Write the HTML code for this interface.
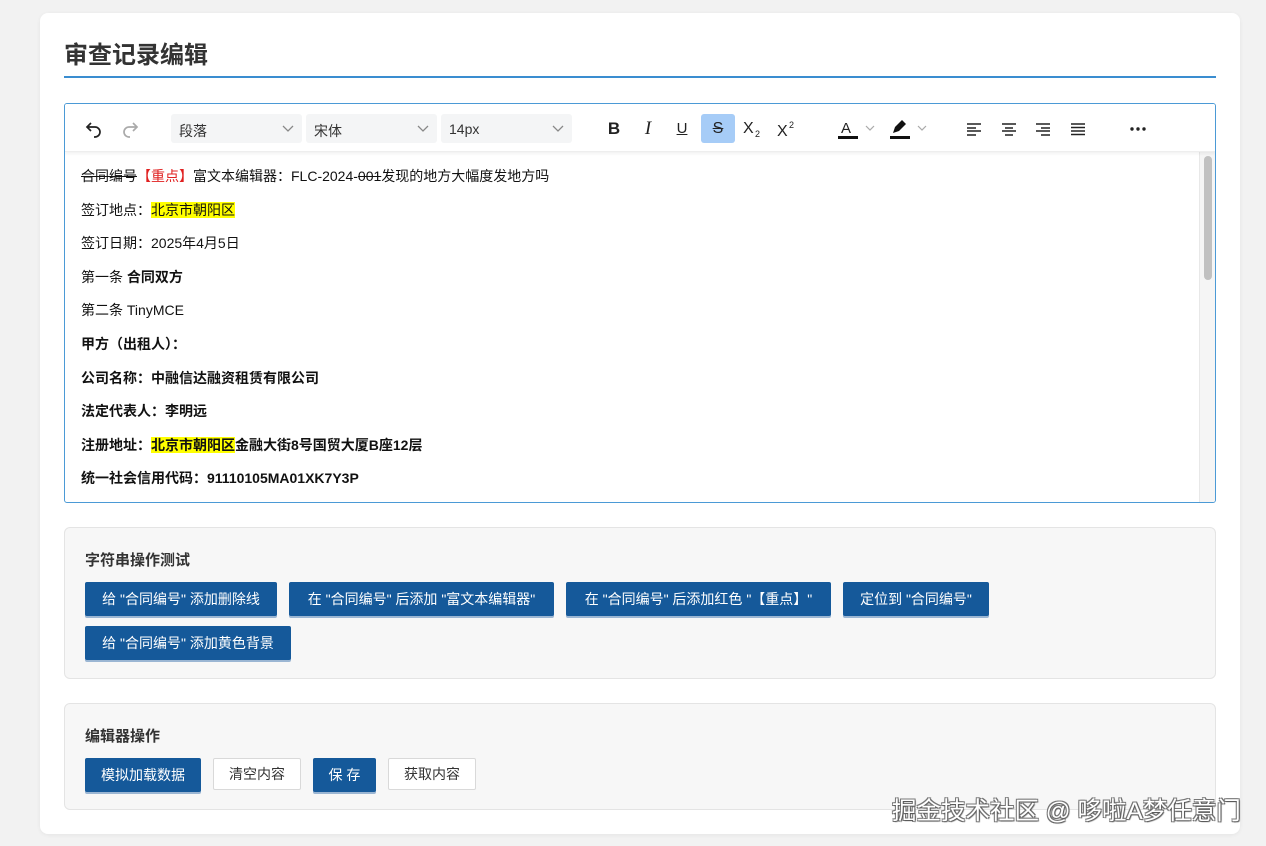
<!DOCTYPE html>
<html><head><meta charset="utf-8"><style>
*{box-sizing:border-box;margin:0;padding:0}
body{width:1266px;height:846px;background:#f2f2f2;font-family:"Liberation Sans","Noto Sans CJK SC",sans-serif;position:relative;overflow:hidden;color:#222}
.card{position:absolute;left:40px;top:13px;width:1200px;height:821px;background:#fff;border-radius:8px;box-shadow:0 1px 4px rgba(0,0,0,.06)}
.title{position:absolute;left:64px;top:35px;font-size:24px;font-weight:bold;color:#333}
.hr{position:absolute;left:64px;top:76px;width:1152px;height:2px;background:#3a8dd0}
.ed{position:absolute;left:64px;top:103px;width:1152px;height:400px;border:1px solid #4b9ad6;border-radius:3px;overflow:hidden}
.tb{position:absolute;left:0;top:0;width:1150px;height:48px;background:#fff;box-shadow:0 2px 3px rgba(0,0,0,.05);border-bottom:1px solid #eee}
.sel{position:absolute;top:10px;height:29px;background:#f4f5f6;border-radius:3px;font-size:14px;color:#333;padding:7px 8px;}
.sel svg{position:absolute;right:8px;top:11px}
.ic{position:absolute;top:10px;width:34px;height:29px;display:flex;align-items:center;justify-content:center;font-size:16px;color:#222}
.content{position:absolute;left:16px;top:64px;font-size:14px;line-height:33.6px;color:#111}
.content p{height:33.6px;white-space:nowrap}
.hl{background:#ffff00}
.sb{position:absolute;right:4px;top:52px;width:8px;height:124px;background:#c1c1c1;border-radius:4px}
.sbt{position:absolute;right:0;top:48px;width:16px;height:350px;background:#f5f5f5;border-left:1px solid #e8e8e8}
.sec{position:absolute;left:64px;width:1152px;background:#f7f7f7;border:1px solid #e4e4e4;border-radius:6px}
.sec h3{position:absolute;left:20px;font-size:15px;font-weight:bold;color:#333}
.btn{position:absolute;height:34px;background:#15599a;color:#fff;font-size:14px;display:flex;align-items:center;justify-content:center;border-radius:2px;box-shadow:0 2px 0 #9bb6d3;white-space:nowrap}
.btn.w{background:#fff;color:#333;border:1px solid #d9d9d9;box-shadow:none;height:32px}
.wm{position:absolute;left:892px;top:792px;font-size:24.5px;color:#fff;text-shadow:1px 1px 1px #555,-1px -1px 0 #777,1px -1px 0 #777,-1px 1px 0 #777;white-space:nowrap}
</style></head><body>
<div class="card"></div>
<div class="title">审查记录编辑</div>
<div class="hr"></div>
<div class="ed">
 <div class="sbt"><div class="sb" style="top:4px;right:3px"></div></div>
 <div class="tb">
  <div class="ic" style="left:12px"><svg width="20" height="20" viewBox="0 0 20 20" fill="none" stroke="#222" stroke-width="1.7"><path d="M7 4L3 8l4 4M3 8h8a5 5 0 0 1 0 10h-1"/></svg></div>
  <div class="ic" style="left:48px"><svg width="20" height="20" viewBox="0 0 20 20" fill="none" stroke="#aaa" stroke-width="1.7"><path d="M13 4l4 4-4 4M17 8H9a5 5 0 0 0 0 10h1"/></svg></div>
  <div class="sel" style="left:106px;width:131px">段落<svg width="12" height="8" viewBox="0 0 12 8"><path d="M1 1l5 5 5-5" fill="none" stroke="#888" stroke-width="1.3"/></svg></div>
  <div class="sel" style="left:241px;width:131px">宋体<svg width="12" height="8" viewBox="0 0 12 8"><path d="M1 1l5 5 5-5" fill="none" stroke="#888" stroke-width="1.3"/></svg></div>
  <div class="sel" style="left:376px;width:131px">14px<svg width="12" height="8" viewBox="0 0 12 8"><path d="M1 1l5 5 5-5" fill="none" stroke="#888" stroke-width="1.3"/></svg></div>
  <div class="ic" style="left:532px;font-weight:bold;font-size:17px">B</div>
  <div class="ic" style="left:566px;font-style:italic;font-family:'Liberation Serif',serif;font-size:19px">I</div>
  <div class="ic" style="left:600px;text-decoration:underline;font-size:15px">U</div>
  <div class="ic" style="left:636px;background:#a6ccf7;border-radius:3px;text-decoration:line-through;font-size:16px">S</div>
  <div class="ic" style="left:672px"><svg width="24" height="20" viewBox="0 0 24 20"><text x="1" y="14" font-size="16" font-family="Liberation Sans" fill="#222">X</text><text x="13" y="18" font-size="9" font-family="Liberation Sans" fill="#222">2</text></svg></div>
  <div class="ic" style="left:706px"><svg width="24" height="20" viewBox="0 0 24 20"><text x="1" y="17" font-size="16" font-family="Liberation Sans" fill="#222">X</text><text x="13" y="9" font-size="9" font-family="Liberation Sans" fill="#222">2</text></svg></div>
  <div class="ic" style="left:770px;width:46px"><svg width="44" height="22" viewBox="0 0 44 22"><text x="5" y="15" font-size="15" font-family="Liberation Sans" fill="#222">A</text><rect x="2" y="18" width="20" height="3" fill="#111"/><path d="M30 8l4 4 4-4" fill="none" stroke="#aaa" stroke-width="1.2"/></svg></div>
  <div class="ic" style="left:822px;width:46px"><svg width="44" height="22" viewBox="0 0 44 22"><path d="M5 15l2-6 7-7 4 4-7 7z" fill="#111"/><rect x="2" y="18" width="20" height="3" fill="#111"/><path d="M30 8l4 4 4-4" fill="none" stroke="#aaa" stroke-width="1.2"/></svg></div>
  <div class="ic" style="left:892px"><svg width="16" height="14" stroke="#222" stroke-width="1.6"><path d="M1 2h14M1 6h9M1 9h14M1 13h9"/></svg></div>
  <div class="ic" style="left:927px"><svg width="16" height="14" stroke="#222" stroke-width="1.6"><path d="M1 2h14M4 6h8M1 9h14M4 13h8"/></svg></div>
  <div class="ic" style="left:961px"><svg width="16" height="14" stroke="#222" stroke-width="1.6"><path d="M1 2h14M6 6h9M1 9h14M6 13h9"/></svg></div>
  <div class="ic" style="left:996px"><svg width="16" height="14" stroke="#222" stroke-width="1.6"><path d="M1 2h14M1 5.5h14M1 9h14M1 12.5h14"/></svg></div>
  <div class="ic" style="left:1056px"><svg width="18" height="4"><circle cx="3" cy="2" r="1.7" fill="#222"/><circle cx="9" cy="2" r="1.7" fill="#222"/><circle cx="15" cy="2" r="1.7" fill="#222"/></svg></div>
 </div>
 <div class="content" style="top:56px">
  <p><s>合同编号</s><span style="color:#e02020">【重点】</span>富文本编辑器：FLC-2024-<s>001</s>发现的地方大幅度发地方吗</p>
  <p>签订地点：<span class="hl">北京市朝阳区</span></p>
  <p>签订日期：2025年4月5日</p>
  <p>第一条 <b>合同双方</b></p>
  <p>第二条 TinyMCE</p>
  <p><b>甲方（出租人）：</b></p>
  <p><b>公司名称：中融信达融资租赁有限公司</b></p>
  <p><b>法定代表人：李明远</b></p>
  <p><b>注册地址：<span class="hl">北京市朝阳区</span>金融大街8号国贸大厦B座12层</b></p>
  <p><b>统一社会信用代码：91110105MA01XK7Y3P</b></p>
 </div>
</div>

<div class="sec" style="top:527px;height:152px">
 <h3 style="top:21px">字符串操作测试</h3>
</div>
<div class="btn" style="left:85px;top:582px;width:192px">给 "合同编号" 添加删除线</div>
<div class="btn" style="left:289px;top:582px;width:265px">在 "合同编号" 后添加 "富文本编辑器"</div>
<div class="btn" style="left:566px;top:582px;width:265px">在 "合同编号" 后添加红色 "【重点】"</div>
<div class="btn" style="left:843px;top:582px;width:146px">定位到 "合同编号"</div>
<div class="btn" style="left:85px;top:626px;width:206px">给 "合同编号" 添加黄色背景</div>

<div class="sec" style="top:703px;height:107px">
 <h3 style="top:21px">编辑器操作</h3>
</div>
<div class="btn" style="left:85px;top:758px;width:116px">模拟加载数据</div>
<div class="btn w" style="left:213px;top:758px;width:88px">清空内容</div>
<div class="btn" style="left:313px;top:758px;width:63px">保 存</div>
<div class="btn w" style="left:388px;top:758px;width:88px">获取内容</div>

<div class="wm">掘金技术社区 @ 哆啦A梦任意门</div>
</body></html>
